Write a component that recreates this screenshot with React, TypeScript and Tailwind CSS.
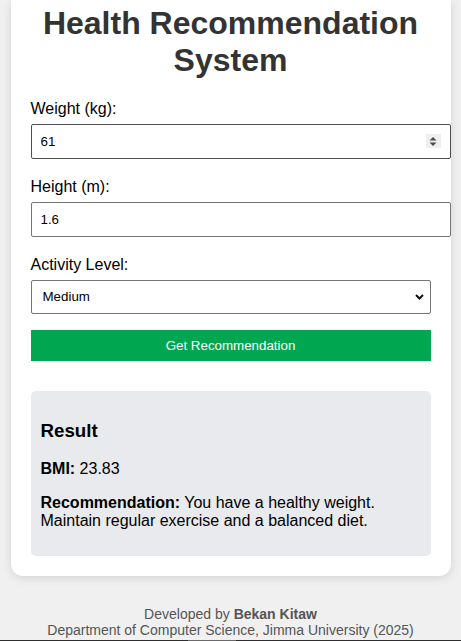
import React from "react";

export default function App() {
  return (
    <div className="h-[641px] overflow-hidden bg-[#f0f0f0] flex flex-col font-['Liberation_Sans',Arial,sans-serif] text-black">
      <div className="mx-auto w-[440px] bg-white rounded-b-[12px] shadow-[0_2px_10px_rgba(0,0,0,0.12)] px-5 pt-[5px] pb-5">
        <h1 className="text-[32px] leading-[37px] font-bold text-[#333] text-center">
          Health Recommendation System
        </h1>

        <label className="block mt-[21px] mb-[6px] text-[16px] leading-[18px]">Weight (kg):</label>
        <div className="relative w-[420px]">
          <input
            type="text"
            defaultValue="61"
            className="block w-[420px] h-[35px] px-[9px] border border-[#4f4f4f] rounded-[2px] text-[13.33px] text-black bg-white outline-none"
          />
          <div className="absolute left-[395px] top-[10px] w-[15px] h-[14px] bg-[#efefef] flex items-center justify-center">
            <svg width="8" height="11" viewBox="0 0 8 11">
              <path d="M4 1 L7.5 4.5 H0.5 Z" fill="#4a4a4a" />
              <path d="M4 10 L7.5 6.5 H0.5 Z" fill="#4a4a4a" />
            </svg>
          </div>
        </div>

        <label className="block mt-[19px] mb-[6px] text-[16px] leading-[18px]">Height (m):</label>
        <input
          type="text"
          defaultValue="1.6"
          className="block w-[420px] h-[35px] px-[9px] border border-[#767676] rounded-[2px] text-[13.33px] text-black bg-white outline-none"
        />

        <label className="block mt-[19px] mb-[6px] text-[16px] leading-[18px]">Activity Level:</label>
        <div className="relative">
          <select
            defaultValue="Medium"
            className="block appearance-none w-full h-[34px] pl-[11px] border border-[#767676] rounded-[2px] text-[13.33px] text-black bg-white outline-none"
          >
            <option>Low</option>
            <option>Medium</option>
            <option>High</option>
          </select>
          <svg
            className="absolute left-[384px] top-[14px] pointer-events-none"
            width="9"
            height="6"
            viewBox="0 0 9 6"
          >
            <path d="M1 1 L4.5 4.5 L8 1" fill="none" stroke="#111" strokeWidth="2" />
          </svg>
        </div>

        <button className="block w-full mt-4 h-[31px] bg-[#00a650] text-white text-[13.33px] text-center">
          Get Recommendation
        </button>

        <div className="mt-[30px] bg-[#e8eaed] rounded-[5px] px-[10px] pt-[10px] pb-[10px]">
          <h3 className="mt-[19px] text-[18.72px] leading-[22px] font-bold">Result</h3>
          <p className="mt-[18px] text-[16px] leading-[18px]">
            <strong>BMI:</strong> 23.83
          </p>
          <p className="mt-4 mb-4 text-[16px] leading-[18px]">
            <strong>Recommendation:</strong> You have a healthy weight. Maintain regular exercise and a balanced diet.
          </p>
        </div>
      </div>

      <footer className="mt-[30px] text-center text-[14px] leading-[16px] text-[#555]">
        <div>
          Developed by <strong>Bekan Kitaw</strong>
        </div>
        <div>Department of Computer Science, Jimma University (2025)</div>
      </footer>

      <div className="flex-1" />
      <div className="h-px bg-[#2e2e2e] flex">
        <div className="w-[188px]" />
        <div className="w-[48px] bg-[#6a6a6a]" />
      </div>
    </div>
  );
}
